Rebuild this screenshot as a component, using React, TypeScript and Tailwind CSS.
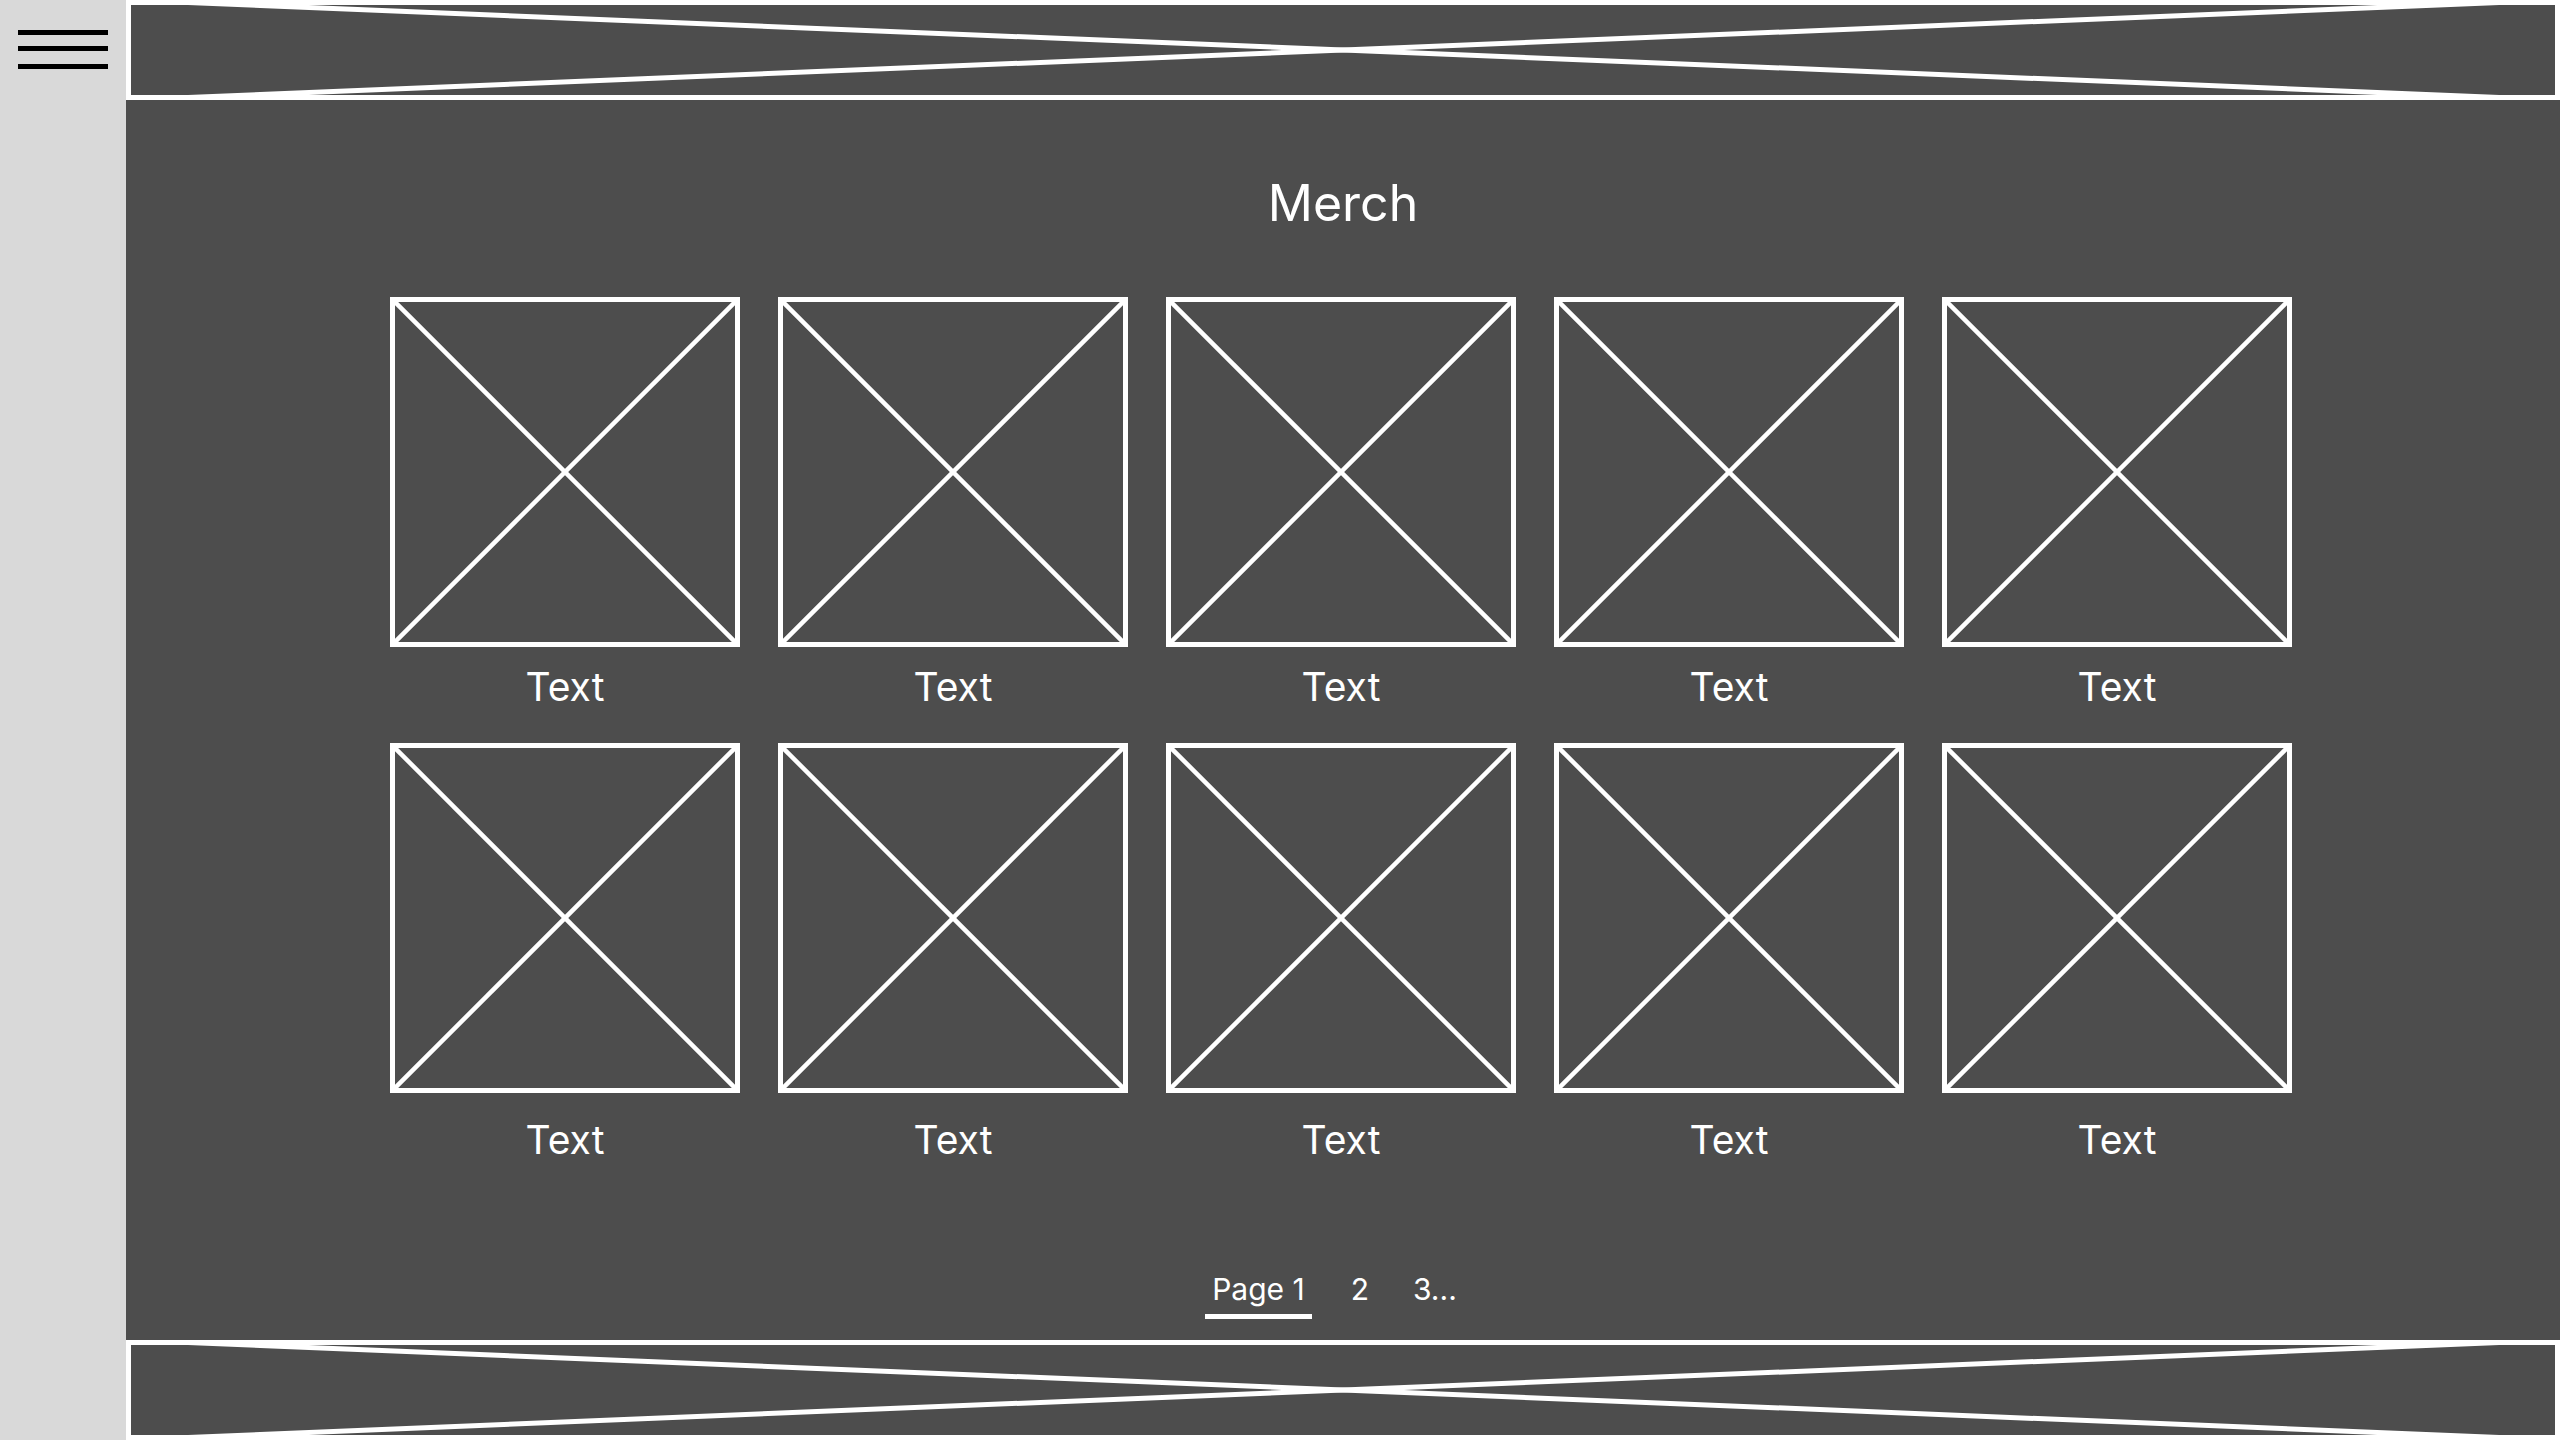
import React from "react";

function Placeholder({ className = "", stroke = 4 }: { className?: string; stroke?: number }) {
    return (
        <div className={`relative border-[5px] border-white bg-[#4d4d4d] ${className}`}>
            <svg className="absolute -inset-[5px] h-[calc(100%+10px)] w-[calc(100%+10px)]" viewBox="0 0 100 100" preserveAspectRatio="none">
                <line x1="0" y1="0" x2="100" y2="100" stroke="white" strokeWidth={stroke} vectorEffect="non-scaling-stroke" />
                <line x1="0" y1="100" x2="100" y2="0" stroke="white" strokeWidth={stroke} vectorEffect="non-scaling-stroke" />
            </svg>
        </div>
    );
}

function MerchItem({ labelGap }: { labelGap: string }) {
    return (
        <div className="flex flex-col items-center">
            <Placeholder className="h-[350px] w-[350px]" stroke={4.5} />
            <span className={`${labelGap} text-[39px] leading-[46px] text-white`}>Text</span>
        </div>
    );
}

export default function App() {
    const items = [0, 1, 2, 3, 4];

    return (
        <div className="flex h-[1440px] w-[2560px] bg-[#d9d9d9] font-['Inter','Noto_Sans',sans-serif]">
            <aside className="w-[126px] shrink-0 pl-[18px] pt-[30px]">
                <div className="h-[5px] w-[90px] bg-black" />
                <div className="mt-[11px] h-[5px] w-[90px] bg-black" />
                <div className="mt-[13px] h-[5px] w-[90px] bg-black" />
            </aside>

            <div className="flex flex-1 flex-col">
                <Placeholder className="h-[100px] shrink-0" stroke={5} />

                <main className="flex flex-1 flex-col items-center bg-[#4d4d4d] pb-[21px] pt-[73px]">
                    <h1 className="text-[50px] leading-[60px] text-white">Merch</h1>

                    <div className="mr-[4px] mt-[64px] grid grid-cols-[repeat(5,350px)] gap-x-[38px] gap-y-[33px]">
                        {items.map((i) => (
                            <MerchItem key={`a${i}`} labelGap="mt-[17px]" />
                        ))}
                        {items.map((i) => (
                            <MerchItem key={`b${i}`} labelGap="mt-[24px]" />
                        ))}
                    </div>

                    <nav className="mr-[24px] mt-auto flex items-start text-[30px] leading-[36px] text-white">
                        <a href="#" className="border-b-[5px] border-white px-[7px] pb-[7px]">Page 1</a>
                        <a href="#" className="ml-[39px]">2</a>
                        <a href="#" className="ml-[44px]">3...</a>
                    </nav>
                </main>

                <Placeholder className="h-[100px] shrink-0" stroke={5} />
            </div>
        </div>
    );
}
